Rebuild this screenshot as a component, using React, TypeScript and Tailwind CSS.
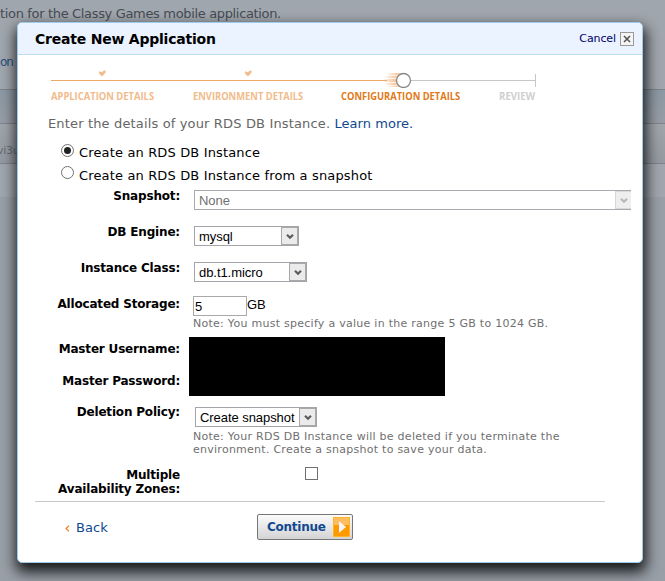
import React from "react";

function Chevron({ disabled }: { disabled?: boolean }) {
  return (
    <svg className="mt-px" width="8" height="6" viewBox="0 0 8 6">
      <path d="M1 0.800l3 3 3-3" fill="none" stroke={disabled ? "#b8b8b8" : "#5c5c5c"} strokeWidth="2.200" />
    </svg>
  );
}

function Select({ value, width, disabled }: { value: string; width: string; disabled?: boolean }) {
  return (
    <div
      className={`flex h-5 ${width} border bg-white font-['Liberation_Sans',sans-serif] text-[13px] ${
        disabled ? "border-[#a9a9b0] border-r-0 text-[#707070]" : "border-[#a4a4aa] text-black"
      }`}
    >
      <span className="flex-1 whitespace-nowrap pl-1 leading-[20px] tracking-[-0.06px]">{value}</span>
      <span
        className={`flex h-[18px] items-center justify-center border ${
          disabled ? "w-4 border-[#d8d8d8] border-r-0 bg-[#eeeeee]" : "w-[17px] border-[#a8a8a8] bg-[#ebebeb]"
        }`}
      >
        <Chevron disabled={disabled} />
      </span>
    </div>
  );
}

function Row({ label, height, children }: { label: React.ReactNode; height: string; children?: React.ReactNode }) {
  return (
    <div className={`flex ${height}`}>
      <div className="w-[162px] shrink-0 whitespace-nowrap pt-0.5 text-right text-[12px] font-bold leading-[14px] tracking-[-0.18px] text-black">
        {label}
      </div>
      {children}
    </div>
  );
}

function Tick() {
  return (
    <svg width="8" height="7" viewBox="0 0 8 7">
      <path d="M0.5 1l2 1.3L7 0v2.7L3.5 6.5 0.5 3.6z" fill="#f0bd8c" />
    </svg>
  );
}

function Steps() {
  return (
    <div className="h-[55px] pl-[33px]">
      <svg className="block" width="490" height="33" viewBox="0 0 490 33">
        <defs>
          <linearGradient id="trail" x1="0" x2="1">
            <stop offset="0" stopColor="#f2b984" stopOpacity="0" />
            <stop offset="1" stopColor="#f2b984" />
          </linearGradient>
        </defs>
        <g transform="translate(47.500 15)"><Tick /></g>
        <g transform="translate(193.500 15)"><Tick /></g>
        <path d="M0 25.500h336" stroke="#eda96a" />
        <path d="M360 25.500h125M484.500 19v13" stroke="#c6c6c6" />
        <g fill="url(#trail)" opacity=".85">
          <rect x="336" y="18" width="15" height="2" />
          <rect x="333" y="21" width="15" height="2" />
          <rect x="331" y="24" width="15" height="3" />
          <rect x="332" y="28" width="16" height="2" />
          <rect x="336" y="31" width="15" height="1" />
          <rect x="335" y="18" width="17" height="14" opacity=".6" />
        </g>
        <circle cx="352.500" cy="25.500" r="7" fill="#fff" stroke="#888" strokeWidth="1.300" />
      </svg>
      <div className="flex whitespace-nowrap font-['Open_Sans',sans-serif] text-[11px] font-bold leading-[15px] text-[#f1bb8b]">
        <div className="w-[142px]"><span className="inline-block origin-left scale-x-[0.855]">APPLICATION DETAILS</span></div>
        <div className="w-[148px]"><span className="inline-block origin-left scale-x-[0.85]">ENVIRONMENT DETAILS</span></div>
        <div className="w-[157px] text-[#df7a18]"><span className="inline-block origin-left scale-x-[0.85]">CONFIGURATION DETAILS</span></div>
        <div className="w-[50px] pl-px text-[#cfcfcf]"><span className="inline-block origin-left scale-x-[0.88]">REVIEW</span></div>
      </div>
    </div>
  );
}

function Radio({ checked, label }: { checked?: boolean; label: string }) {
  return (
    <div className="flex h-[23px] pl-[43px]">
      <span className={`${checked ? "mt-[3px]" : "mt-[2px]"} flex size-[13px] items-center justify-center rounded-full border border-[#707070] bg-white`}>
        {checked && <span className="size-[7px] rounded-full bg-[#222]" />}
      </span>
      <span className="pl-[5px] text-[13px] leading-[24px] tracking-[0.15px] text-black">{label}</span>
    </div>
  );
}

export default function App() {
  return (
    <div className="relative h-[581px] w-[665px] overflow-hidden bg-[#989fa7] font-['DejaVu_Sans',sans-serif]">
      <div className="h-[89px] bg-[#a0a6ad] text-[13px] text-[#474b54]">
        <div className="h-[50px] whitespace-nowrap pt-[5px] leading-[18px] tracking-[-0.34px]">tion for the Classy Games mobile application.</div>
        <div className="text-[12px] leading-[25px] tracking-[-1px] text-[#214f80]">on</div>
      </div>
      <div className="h-[35px] border-y border-[#7d848c] bg-linear-to-b from-[#8c98a4] to-[#969ca4]" />
      <div className="h-10 border-b border-[#7d848c] bg-linear-to-b from-[#a0a5ab] to-[#9498a0] text-[11px] leading-[54px] tracking-[-0.3px] text-[#666b72]">
        <span className="-ml-[3px]">vi3u</span>
      </div>
      <div className="h-[33px] bg-[#a0a6ad]" />

      <div className="absolute left-[17px] top-[22px] h-[541px] w-[626px] overflow-hidden rounded-[5px] border border-[#9fcbea] bg-white shadow-[1px_7px_14px_2px_rgba(0,0,0,0.85)]">
        <div className="flex h-8 items-center border-b border-[#bcdff2] bg-[#eaf3ff] pl-[17px] pr-[8px]">
          <h1 className="flex-1 pt-px text-[14px] font-bold tracking-[-0.22px] text-black">Create New Application</h1>
          <span className="pt-[2px] text-[11px] tracking-[-0.1px] text-[#000066]">Cancel</span>
          <span className="ml-[4px] flex size-[14px] items-center justify-center border border-[#999] bg-[#f4f4f4]">
            <svg width="8" height="8" viewBox="0 0 8 8"><path d="M1 1l6 6M7 1l-6 6" stroke="#555" strokeWidth="1.600" /></svg>
          </span>
        </div>

        <Steps />

        <p className="h-[31px] whitespace-nowrap pl-[30px] text-[13px] leading-[28px] tracking-[0.15px] text-[#666]">
          Enter the details of your RDS DB Instance. <span className="tracking-[0.05px] text-[#11498f]">Learn more.</span>
        </p>

        <Radio checked label="Create an RDS DB Instance" />
        <Radio label="Create an RDS DB Instance from a snapshot" />

        <Row label="Snapshot:" height="h-9">
          <div className="pl-[14px] pt-[3px]"><Select value="None" width="w-[437px]" disabled /></div>
        </Row>
        <Row label="DB Engine:" height="h-9">
          <div className="pl-[14px] pt-[3px]"><Select value="mysql" width="w-[105px]" /></div>
        </Row>
        <Row label="Instance Class:" height="h-9">
          <div className="pl-[14px] pt-[3px]"><Select value="db.t1.micro" width="w-[113px]" /></div>
        </Row>
        <Row label="Allocated Storage:" height="h-[42px]">
          <div className="pl-[13px] pt-px">
            <div className="flex font-['Liberation_Sans',sans-serif] text-[13px] leading-[20px] text-black">
              <span className="h-5 w-[54px] border border-[#a9a9a9] pl-px">5</span>
              <span className="leading-[18px]">GB</span>
            </div>
            <p className="whitespace-nowrap pt-px text-[11px] leading-[14px] tracking-[0.27px] text-[#707070]">Note: You must specify a value in the range 5 GB to 1024 GB.</p>
          </div>
        </Row>

        <div className="flex h-[66px]">
          <div className="w-[162px] pt-[5px] text-right text-[12px] font-bold leading-[14px] tracking-[-0.18px] text-black">
            <div className="h-8">Master Username:</div>
            <div>Master Password:</div>
          </div>
          <div className="ml-[9px] h-[59px] w-[256px] bg-black" />
        </div>

        <Row label="Deletion Policy:" height="h-[63px]">
          <div className="pl-[13px] pt-1">
            <div className="pl-[2px]"><Select value="Create snapshot" width="w-[122px]" /></div>
            <p className="whitespace-nowrap pt-[3px] text-[11px] leading-[13px] tracking-[0.26px] text-[#707070]">
              Note: Your RDS DB Instance will be deleted if you terminate the<br />
              environment. Create a snapshot to save your data.
            </p>
          </div>
        </Row>
        <Row label={<>Multiple<br />Availability Zones:</>} height="h-[35px]">
          <span className="ml-[125px] mt-px size-[13px] border border-[#707070] bg-white" />
        </Row>

        <div className="ml-[17px] w-[570px] border-t border-[#c8c8c8]" />
        <div className="flex h-[50px] items-center">
          <div className="flex w-[239px] items-center pl-[47px] pt-px text-[13px] tracking-[0.1px] text-[#11498f]">
            <svg className="mr-[6px] mt-px" width="5" height="7" viewBox="0 0 5 7"><path d="M4 0.700L1 3.500l3 2.800" fill="none" stroke="#ee842a" strokeWidth="1.200" /></svg>
            Back
          </div>
          <div className="flex h-[26px] w-24 items-center justify-between rounded-[2px] border border-[#777] bg-linear-to-b from-[#fbfbfb] to-[#d4d4d6] pl-[9px] pr-[2px] text-[12px] font-bold tracking-[-0.25px] text-[#11498f]">
            Continue
            <svg width="17" height="20" viewBox="0 0 17 20">
              <rect width="17" height="20" fill="#ff9900" />
              <rect width="17" height="8" fill="#ffbd61" />
              <rect x=".5" y=".5" width="16" height="19" fill="none" stroke="#ffb526" />
              <path d="M6 4l7 6-7 6z" fill="#f5f5f5" />
            </svg>
          </div>
        </div>
      </div>
    </div>
  );
}
